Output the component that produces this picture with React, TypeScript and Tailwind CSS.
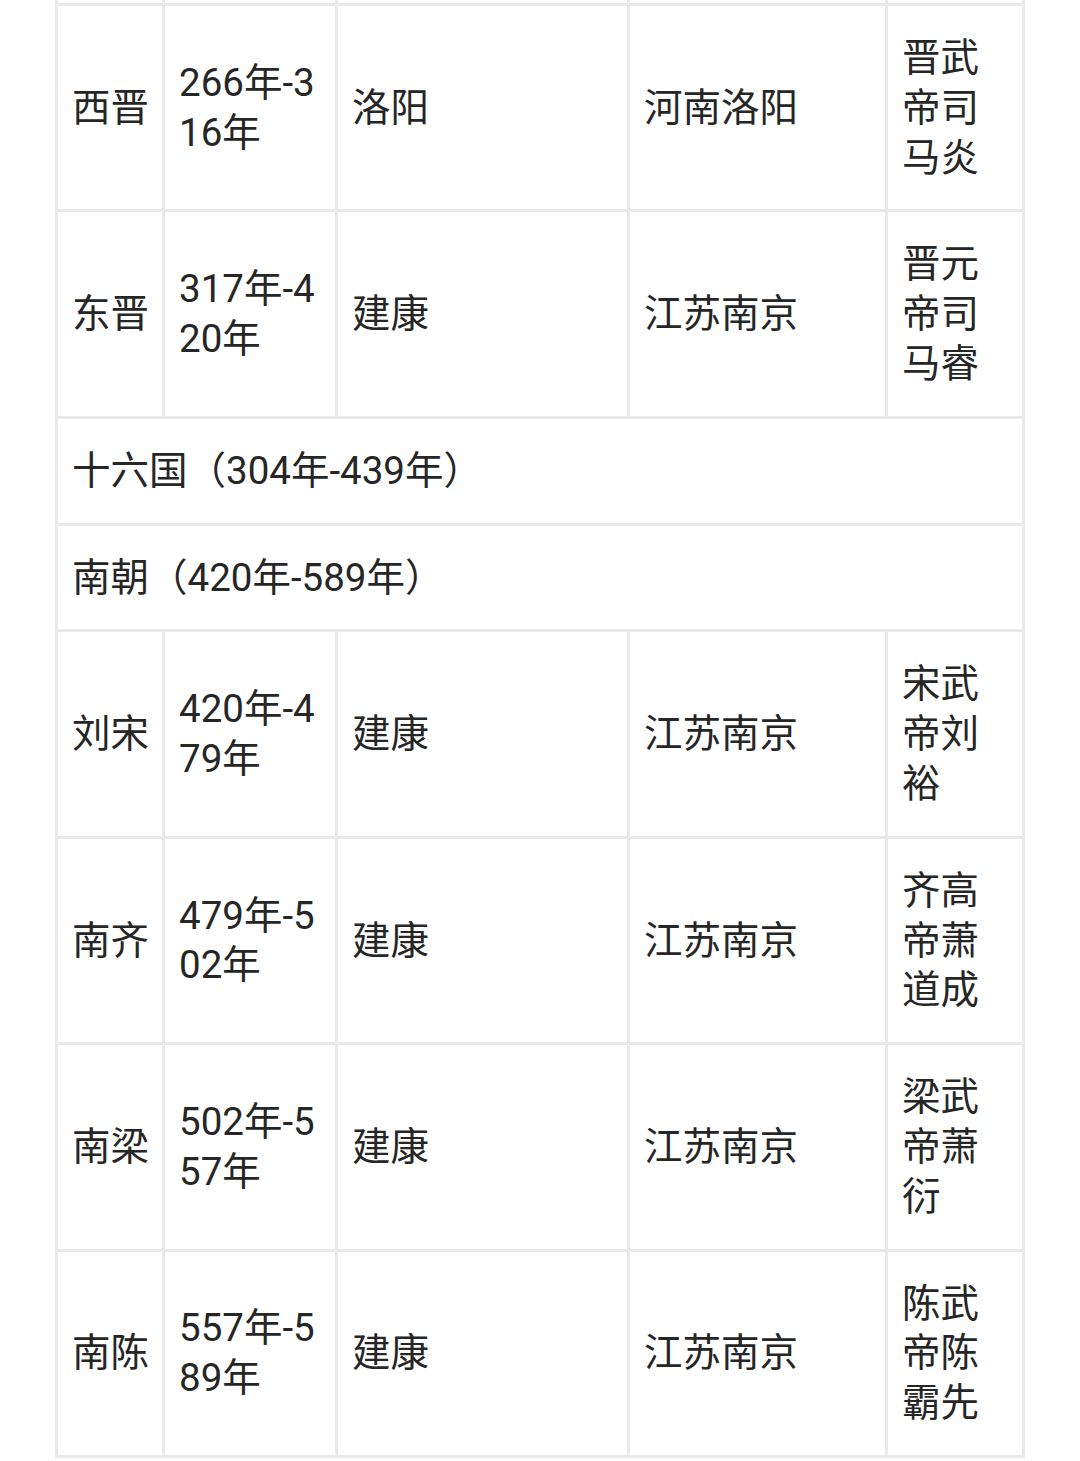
const rows: ([string, string, string, string, string] | string)[] = [
  ["西晋", "266年-316年", "洛阳", "河南洛阳", "晋武帝司马炎"],
  ["东晋", "317年-420年", "建康", "江苏南京", "晋元帝司马睿"],
  "十六国（304年-439年）",
  "南朝（420年-589年）",
  ["刘宋", "420年-479年", "建康", "江苏南京", "宋武帝刘裕"],
  ["南齐", "479年-502年", "建康", "江苏南京", "齐高帝萧道成"],
  ["南梁", "502年-557年", "建康", "江苏南京", "梁武帝萧衍"],
  ["南陈", "557年-589年", "建康", "江苏南京", "陈武帝陈霸先"],
];

const colPad = ["pl-[14px] pr-[8px]", "pl-[14px] pr-[14px]", "pl-[14px] pr-[15px]", "pl-[14px] pr-[15px]", "pl-[14px] pr-[15px]"];

export default function App() {
  return (
    <div
      className="min-h-[1461px] w-[1080px] overflow-hidden bg-white text-[38.5px] leading-[49.8px] text-[#262626]"
      style={{ fontFamily: 'Roboto, "Noto Sans CJK SC", sans-serif' }}
    >
      <table className="ml-[55px] w-[970px] table-fixed border-separate border-spacing-0 border-r-[3px] border-b-[3px] border-[#e9e9e9]">
        <colgroup>
          <col className="w-[107px]" />
          <col className="w-[173px]" />
          <col className="w-[292px]" />
          <col className="w-[258px]" />
          <col className="w-[137px]" />
        </colgroup>
        <tbody>
          <tr>
            {[0, 1, 2, 3, 4].map((i) => (
              <td key={i} className="h-[3px] border-l-[3px] border-[#e9e9e9] p-0" />
            ))}
          </tr>
          {rows.map((row, i) =>
            typeof row === "string" ? (
              <tr key={i}>
                <td colSpan={5} className="border-t-[3px] border-l-[3px] border-[#e9e9e9] py-[27px] pl-[14px] align-middle">
                  {row}
                </td>
              </tr>
            ) : (
              <tr key={i}>
                {row.map((cell, j) => (
                  <td
                    key={j}
                    className={`border-t-[3px] border-l-[3px] border-[#e9e9e9] py-[27px] align-middle break-all ${colPad[j]}`}
                  >
                    {cell}
                  </td>
                ))}
              </tr>
            )
          )}
        </tbody>
      </table>
    </div>
  );
}
